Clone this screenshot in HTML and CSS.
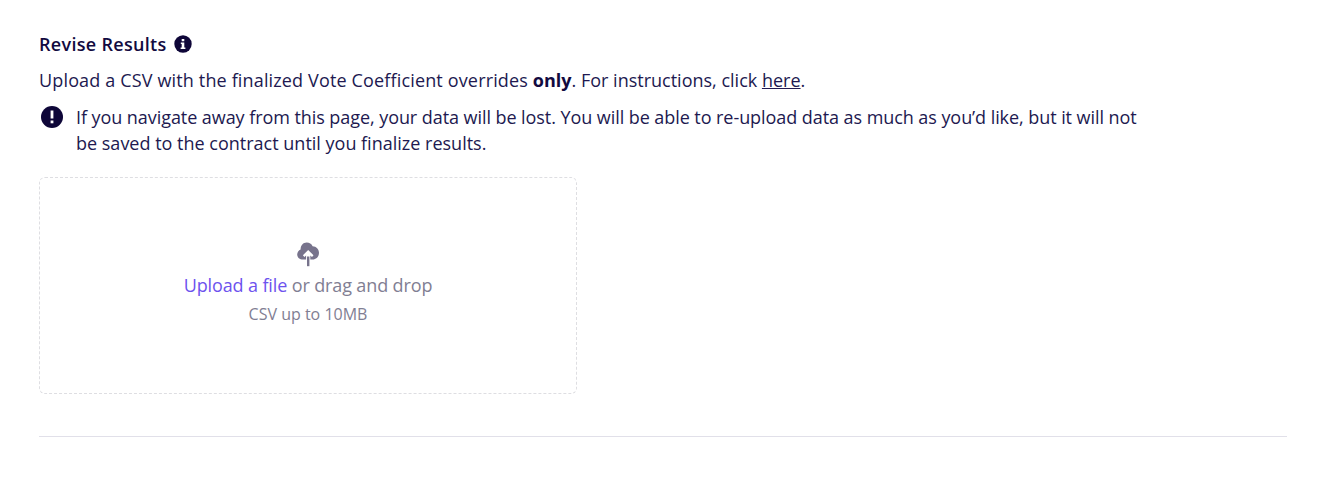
FILE: index.html
```html
<!DOCTYPE html>
<html lang="en">
<head>
<meta charset="utf-8">
<title>Revise Results</title>
<link rel="stylesheet" href="styles.css">
</head>
<body>
<main class="section">
  <h2 class="title">Revise Results
    <svg class="info" viewBox="0 0 18 18"><circle cx="9" cy="9" r="8.700" fill="#0e0638"/><path d="M7.700 4h2.600v2.200H7.700zM6.800 7.500h3.500v4.900h1.100v1.500H6.600v-1.500h1.100V9h-.9z" fill="#fff"/></svg>
  </h2>
  <p class="intro"><span class="intro-lead">Upload a CSV with the finalized Vote Coefficient overrides </span><b>only</b>. For instructions, click <a class="link">here</a>.</p>
  <div class="notice">
    <svg class="alert" viewBox="0 0 22 22"><circle cx="11" cy="11" r="11" fill="#0e0638"/><path d="M9.600 4.500h2.800v8H9.600z" fill="#fff"/><path d="M9.600 14.500h2.800v2.800H9.600z" fill="#fff"/></svg>
    <p class="notice-text"><span class="notice-lead">If you navigate away from this page, your data will be lost. You will be able to re-upload data as much as you’d like, but it will not</span><br>be saved to the contract until you finalize results.</p>
  </div>
  <div class="drop">
    <svg class="cloud" viewBox="0 0 24 26"><path d="M7 18.500C3.700 18.500 1.200 16.500 1.200 13.500c0-2.400 1.400-4.300 3.400-5.100C4.600 4.500 7.200 1.600 10.700 1.600c2.700 0 4.800 1.300 5.900 3.700 3.700.2 6.400 2.900 6.400 6.400 0 3.800-2.700 6.800-6.300 6.800h-2.400v-3.900l1.700 1.300 1.500-1.600L12.200 9l-5.300 5.300 1.500 1.600 1.700-1.300v3.900z" fill="#77738c"/><path d="M11 15.500h2.400v9.700H11z" fill="#77738c"/></svg>
    <p class="drop-main"><a class="upload">Upload a file</a> or drag and drop</p>
    <p class="drop-sub">CSV up to 10MB</p>
  </div>
</main>
</body>
</html>
```
FILE: styles.css
```css
* { box-sizing: border-box; }
body { margin: 0; background: #fff; color: #211950; font-family: "Open Sans", "Noto Sans", sans-serif; font-size: 18px; }
p, h2 { margin: 0; }
.section { margin: 0 49px 0 39px; padding-top: 30px; height: 437px; border-bottom: 1px solid #e1e0e9; }
.title { display: flex; align-items: center; gap: 8px; height: 28px; font-size: 18px; font-weight: 600; letter-spacing: .3px; color: #120a40; }
.info { width: 18px; height: 18px; }
.intro { margin-top: 9px; line-height: 27px; white-space: nowrap; }
.intro-lead { letter-spacing: .15px; }
.intro b { color: #120a40; }
.link { text-decoration: underline; }
.notice { display: flex; gap: 13px; margin-top: 10px; padding-left: 2px; }
.alert { width: 22px; height: 22px; margin-top: 2px; }
.notice-text { line-height: 26px; white-space: nowrap; }
.notice-lead { letter-spacing: -.065px; }
.drop { display: flex; flex-direction: column; align-items: center; width: 538px; height: 217px; margin-top: 21px; padding-top: 63px; border: 1px dashed #dedee2; border-radius: 6px; color: #817e93; }
.cloud { width: 24px; height: 26px; }
.drop-main { line-height: 27px; margin-top: 5px; letter-spacing: -.13px; }
.upload { color: #6d52ee; }
.drop-sub { font-size: 16px; line-height: 24px; margin-top: 3px; }
```
